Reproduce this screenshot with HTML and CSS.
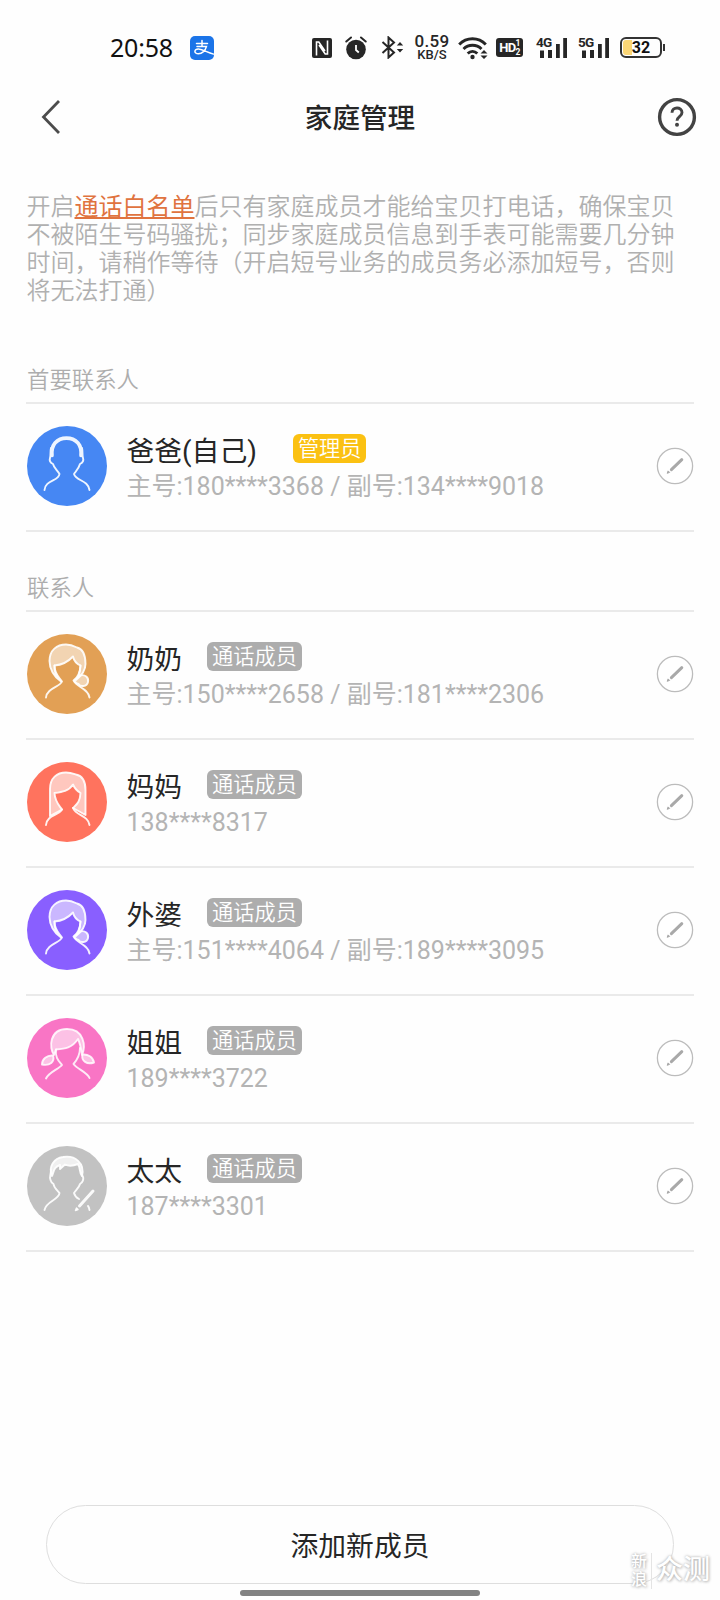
FILE: index.html
```html
<!DOCTYPE html>
<html lang="zh-CN">
<head>
<meta charset="utf-8">
<title>家庭管理</title>
<link rel="stylesheet" href="styles.css">
</head>
<body>
<svg class="defs" aria-hidden="true">
  <symbol id="edit" viewBox="0 0 38 38">
    <circle cx="19" cy="19" r="17.6" fill="#fff" stroke="#bcbcbc" stroke-width="1.3"/>
    <path d="M15.400 22.600 25.800 12.700" stroke="#a9a9a9" stroke-width="3" stroke-linecap="round"/>
    <path d="M11.200 26.300l.9-2.400 1.500 1.500z" fill="#a9a9a9" stroke="#a9a9a9" stroke-width="1"/>
  </symbol>
  <symbol id="granny" viewBox="0 0 80 80">
    <g fill="none" stroke="#fff" stroke-opacity=".9" stroke-width="1.9" stroke-linejoin="round" stroke-linecap="round">
      <path fill="#fff" fill-opacity=".55" d="M34 47.500C27 43 22.500 35 22.500 27C22.500 16 30 10.500 39 10.500C44 10.500 47 12 50 13.500C56 15 58.500 22 58.500 30C58.500 37 54 42 49 46C52 43 53 40 53.500 31.500C50 30 47 27 46 22.500C40 29 34 31 27.500 31.500C27 39 30 44 34 47.500Z"/>
      <path d="M27.500 31.500C27.500 40 32 43 35 47.500C33 53 20 54 19 63.500"/>
      <path d="M53.500 31.500C53 40 50 44 46.500 46.500C49 53 61 54 62.500 63.500"/>
      <path fill="#fff" fill-opacity=".55" d="M53 41.500C58 40 62 43.500 61 48C60 53 53 53 51.500 50C48.500 49 47.500 47 47.500 46.500Z"/>
    </g>
  </symbol>
</svg>

<header class="status">
  <span class="clock">20:58</span>
  <svg class="alipay" viewBox="0 0 24 24"><rect width="24" height="24" rx="5" fill="#1b74e8"/><g fill="none" stroke="#fff" stroke-width="1.500" stroke-linecap="round"><path d="M6.500 7.400h11M12 4.400v6M7 10.400h9.500c-1 4-4.500 7.400-8 7.400-5 0-4.500-5 0-4.700 4.500.3 8 3 15 5"/></g></svg>
  <svg class="nfc" viewBox="0 0 20 20"><rect width="20" height="20" rx="2" fill="#262626"/><path d="M4.500 17.500V4h2.300l6.200 9M15.500 2.500V16h-2.300L7 7" fill="none" stroke="#fff" stroke-width="1.600"/></svg>
  <svg class="alarm" viewBox="0 0 22 24"><circle cx="11" cy="13.500" r="9.800" fill="#262626"/><path d="M1.300 5.500 6 1.500M20.700 5.500 16 1.500" stroke="#262626" stroke-width="2" stroke-linecap="round"/><path d="M11 9v5l2.800 2.500" fill="none" stroke="#fff" stroke-width="1.800"/></svg>
  <svg class="bt" viewBox="0 0 23 23"><path d="M1.500 6 13 16.500 7.500 21.500V1.500L13 6.500 1.500 17" fill="none" stroke="#262626" stroke-width="2"/><path d="M19 6l3.200 3.600h-6.400zM19 16.500l3.200-3.600h-6.400z" fill="#262626"/></svg>
  <span class="speed"><b>0.59</b><i>KB/S</i></span>
  <svg class="wifi" viewBox="0 0 30 24"><g fill="none" stroke="#262626" stroke-width="2.900"><path d="M1.200 8.500C8.500.8 20.500.8 27.800 8.500"/><path d="M5.500 13C10.500 8 18.500 8 23.500 13"/><path d="M9.700 17.500c2.800-2.800 6.800-2.800 9.600 0"/></g><circle cx="14.500" cy="21" r="2.200" fill="#262626"/><path d="M26 14l3.500 3.600h-7zM26 23l3.500-3.600h-7z" fill="#262626"/></svg>
  <span class="hd">HD<span><i>1</i><i>2</i></span></span>
  <span class="signal"><em>4G</em><svg viewBox="0 0 29 20"><path d="M2 12.500h4V20H2zM10 12h4v8h-4zM18 6h3.800v14H18zM25.200 0H29v20h-3.800z" fill="#262626"/></svg></span>
  <span class="signal second"><em>5G</em><svg viewBox="0 0 29 20"><path d="M2 12.500h4V20H2zM10 12h4v8h-4zM18 6h3.800v14H18zM25.200 0H29v20h-3.800z" fill="#262626"/></svg></span>
  <span class="battery">32</span><span class="nub"></span>
</header>

<nav class="nav">
  <svg class="back" viewBox="0 0 20 34"><path d="M19 1 3.500 17 19 33" fill="none" stroke="#4c4c4c" stroke-width="2.800"/></svg>
  <h1>家庭管理</h1>
  <svg class="help" viewBox="0 0 40 40"><circle cx="20" cy="20" r="17.400" fill="none" stroke="#434343" stroke-width="3.400"/><path d="M15 15.800c0-6.500 10-6.300 10-.3 0 4.200-5 4.200-5 8.300" fill="none" stroke="#434343" stroke-width="2.900"/><circle cx="20" cy="27.700" r="2" fill="#434343"/></svg>
</nav>

<p class="notice">开启<a>通话白名单</a>后只有家庭成员才能给宝贝打电话，确保宝贝<br>不被陌生号码骚扰；同步家庭成员信息到手表可能需要几分钟<br>时间，请稍作等待（开启短号业务的成员务必添加短号，否则<br>将无法打通）</p>

<main class="list">
  <h2 class="label">首要联系人</h2>
  <section class="group">
    <article class="row">
      <svg class="avatar dad" viewBox="0 0 80 80"><g fill="none" stroke="#eef5ff" stroke-linecap="round" stroke-linejoin="round"><path stroke-width="3.600" d="M25 29.500C24.500 24 25.500 20 28 17C34 10.500 45 10.500 51 17C53.500 20 54.500 24 54 29.500"/><path stroke-width="1.900" d="M24 22C23 26 24 29 23 32C22 35 24 37 26 38C27 42 30 44 32.500 48C32 55 18 54 17.500 64M55 22C56 26 55 29 56 32C57 35 55 37 53 38C52 42 50 44 47 48C49 55 61 54 62.500 64"/></g></svg>
      <div class="info"><div class="name">爸爸(自己)<span class="tag admin">管理员</span></div><div class="phone">主号:180****3368 / 副号:134****9018</div></div>
      <svg class="edit"><use href="#edit"/></svg>
    </article>
  </section>

  <h2 class="label">联系人</h2>
  <section class="group">
    <article class="row">
      <svg class="avatar orange"><use href="#granny"/></svg>
      <div class="info"><div class="name">奶奶<span class="tag">通话成员</span></div><div class="phone">主号:150****2658 / 副号:181****2306</div></div>
      <svg class="edit"><use href="#edit"/></svg>
    </article>
    <article class="row">
      <svg class="avatar coral" viewBox="0 0 80 80"><g fill="none" stroke="#fff" stroke-opacity=".9" stroke-width="1.900" stroke-linejoin="round" stroke-linecap="round"><path fill="#fff" fill-opacity=".6" d="M23 54V27C23 16 30 10.500 39 10.500C44 10.500 46 11.500 49 12.500C56 14 58.500 21 58.500 28V53L46 46C50 42 53 40 53.500 31C50 29 48 27 46 22.500C42 29 35 30 27.500 31C28 40 32 43 35 47.500Z"/><path d="M35 47.500C31 54 20 53 19 63M46 46C49 54 61 53 62.500 63"/></g></svg>
      <div class="info"><div class="name">妈妈<span class="tag">通话成员</span></div><div class="phone">138****8317</div></div>
      <svg class="edit"><use href="#edit"/></svg>
    </article>
    <article class="row">
      <svg class="avatar purple"><use href="#granny"/></svg>
      <div class="info"><div class="name">外婆<span class="tag">通话成员</span></div><div class="phone">主号:151****4064 / 副号:189****3095</div></div>
      <svg class="edit"><use href="#edit"/></svg>
    </article>
    <article class="row">
      <svg class="avatar pink" viewBox="0 0 80 80"><g fill="none" stroke="#fff" stroke-opacity=".85" stroke-width="1.900" stroke-linejoin="round" stroke-linecap="round"><path fill="#fff" fill-opacity=".55" d="M27 37C22 30 22 11 40 11C57 11 59 28 55 37C54 30 53 25 51 21C45 30 38 31 29 31.500Z"/><path fill="#fff" fill-opacity=".55" d="M26 37.500C28 44 23 48 15 46.500C15 41 20 37 26 37.500ZM55.500 36.500C61 36 66 39 67 44.500C60 47 54 43 55.500 36.500Z"/><path d="M29 31.500C28 40 32 43 35 47C32 51 22 54 19 60.500M53 30C53 38 50 42 46.500 46C50 51 60 54 62.500 60"/></g></svg>
      <div class="info"><div class="name">姐姐<span class="tag">通话成员</span></div><div class="phone">189****3722</div></div>
      <svg class="edit"><use href="#edit"/></svg>
    </article>
    <article class="row">
      <svg class="avatar gray" viewBox="0 0 80 80"><g fill="none" stroke="#fff" stroke-opacity=".92" stroke-width="1.900" stroke-linejoin="round" stroke-linecap="round"><path fill="#fff" fill-opacity=".75" d="M25 30C21 21 27 12 36 11C48 9 58 17 55 30C52 27 54 23 51 18C46 20 41 20 38 18.500L33 23V19C27 21 27 25 25 30Z"/><path d="M24 24C24 29 22 31 23.500 34C24 36 25 37 26.500 38C27 42 30 44 32.500 47C32 54 19 55 17.500 64M55 29C58 33 55 37 53 38C52 42 49 44 47 47C48 51 50 52 52 53M61 60Q62 61 62.500 64"/><path stroke-width="3" d="M52.500 60 66 45"/><path stroke-width="1.500" fill="#fff" d="M48.500 64.500l1-2.500 1.500 1.500z"/></g></svg>
      <div class="info"><div class="name">太太<span class="tag">通话成员</span></div><div class="phone">187****3301</div></div>
      <svg class="edit"><use href="#edit"/></svg>
    </article>
  </section>
</main>

<footer class="footer">
  <button class="add">添加新成员</button>
  <div class="home"></div>
</footer>
<div class="mark"><span class="small">新<br>浪</span><span class="big">众测</span></div>
</body>
</html>
```
FILE: styles.css
```css
* { box-sizing: border-box; }
body {
  margin: 0;
  width: 720px;
  height: 1600px;
  overflow: hidden;
  position: relative;
  display: flex;
  flex-direction: column;
  background: #fefefe;
  color: #262626;
  font-family: Roboto, "Noto Sans CJK SC", sans-serif;
}
svg { display: block; flex: none; }
.defs { position: absolute; width: 0; height: 0; }
i, em { font-style: normal; }

/* status bar */
.status { height: 80px; padding: 15px 0 0 110px; display: flex; align-items: center; flex: none; }
.status > * { flex: none; }
.clock { width: 80px; margin-top: -2px; font: 25px/30px "Noto Sans", sans-serif; color: #111; letter-spacing: -.2px; }
.alipay { width: 24px; height: 24px; }
.nfc { width: 20px; height: 20px; margin-left: 98px; }
.alarm { width: 22px; height: 24px; margin-left: 13px; }
.bt { width: 23px; height: 23px; margin-left: 14px; }
.speed { width: 36px; margin-left: 10px; display: flex; flex-direction: column; align-items: center; gap: 1px; }
.speed b { font: 500 17px/13px Roboto, sans-serif; letter-spacing: .3px; }
.speed i { font: 500 13px/11px Roboto, sans-serif; }
.wifi { width: 30px; height: 24px; margin-left: 8px; }
.hd { width: 27px; height: 19px; margin-left: 8px; border-radius: 3px; background: #262626; color: #fff; font: 700 13px/19px Roboto, sans-serif; display: flex; justify-content: center; letter-spacing: -.6px; }
.hd span { display: flex; flex-direction: column; padding-top: 1px; }
.hd i { font-size: 8.500px; line-height: 8.500px; }
.signal { position: relative; width: 30px; height: 20px; margin-left: 14px; }
.signal svg { width: 29px; height: 20px; margin-left: 1px; }
.signal em { position: absolute; left: -1px; top: -2px; font: 700 13.500px/13px Roboto, sans-serif; letter-spacing: -.7px; background: #fefefe; }
.signal.second { margin-left: 12px; }
.battery { width: 42px; height: 21px; margin-left: 11px; border: 2px solid #333; border-radius: 6px; background: linear-gradient(90deg, #fbd675 9px, #fefefe 9px) content-box; padding: 1px; font: 700 16px/15px Roboto, sans-serif; text-align: center; color: #111; }
.nub { width: 2px; height: 7px; margin-left: 1px; background: #333; }

/* title bar */
.nav { height: 74px; padding: 0 23px 0 40px; display: flex; align-items: center; justify-content: space-between; flex: none; }
.back { width: 20px; height: 34px; margin-right: 3px; }
.nav h1 { margin: 3px 0 0; font-size: 27.600px; line-height: 40px; font-weight: 500; }
.help { width: 40px; height: 40px; }

.notice { margin: 39px 0 0 26.500px; font-size: 24px; line-height: 28px; font-weight: 350; color: #b0b0b0; white-space: nowrap; }
.notice a { color: #e0733f; text-decoration: underline; text-decoration-thickness: 1.500px; text-underline-offset: 2px; font-weight: 400; }

/* contacts */
.list { margin: 59px 26px 0; }
.label { margin: 0; padding: 1px 0 0 1px; height: 38px; font-size: 22.400px; line-height: 30px; font-weight: 350; color: #adadad; }
.group { border-top: 2px solid #eaeaea; margin-bottom: 40px; }
.row { height: 128px; border-bottom: 2px solid #eaeaea; display: flex; padding-left: .5px; }
.avatar { width: 80px; height: 80px; margin-top: 21.500px; border-radius: 50%; }
.dad { background: #4687f3; }
.orange { background: #e2a055; }
.coral { background: #ff735e; }
.purple { background: #895fff; }
.pink { background: #f975c5; }
.gray { background: #c2c2c2; }
.info { flex: 1; margin: 28px 0 0 20px; }
.name { height: 38px; font-size: 27.800px; line-height: 40px; display: flex; }
.tag { margin: 2px 0 0 25px; height: 29px; padding: 0 5px; border-radius: 6px; background: #adadad; color: #fff; font-size: 21.200px; line-height: 29px; font-weight: 350; }
.tag.admin { margin-left: 36px; background: #fbc112; }
.phone { font-size: 25px; line-height: 34px; font-weight: 400; color: #b4b4b4; white-space: nowrap; }
.edit { width: 38px; height: 38px; margin: 43px 0 0; }

/* bottom action */
.footer { margin-top: auto; height: 95px; display: flex; flex-direction: column; align-items: center; flex: none; }
.add { width: 628px; height: 79px; padding: 5px 0 0; border: 1px solid #dedede; border-radius: 40px; background: #fefefe; color: #262626; font: 400 27.800px/40px Roboto, "Noto Sans CJK SC", sans-serif; }
.home { width: 240px; height: 6px; margin-top: 6px; border-radius: 3px; background: #828282; }
.mark { position: absolute; left: 631px; top: 1553px; display: flex; color: #fff; font-weight: 500; text-shadow: 0 0 3px #aaa, 1px 1px 3px #ccc; }
.small { width: 21px; font-size: 16px; line-height: 18px; border-right: 1px solid #e4e4e4; }
.big { margin-left: 4px; font-size: 27px; line-height: 34px; }
```
